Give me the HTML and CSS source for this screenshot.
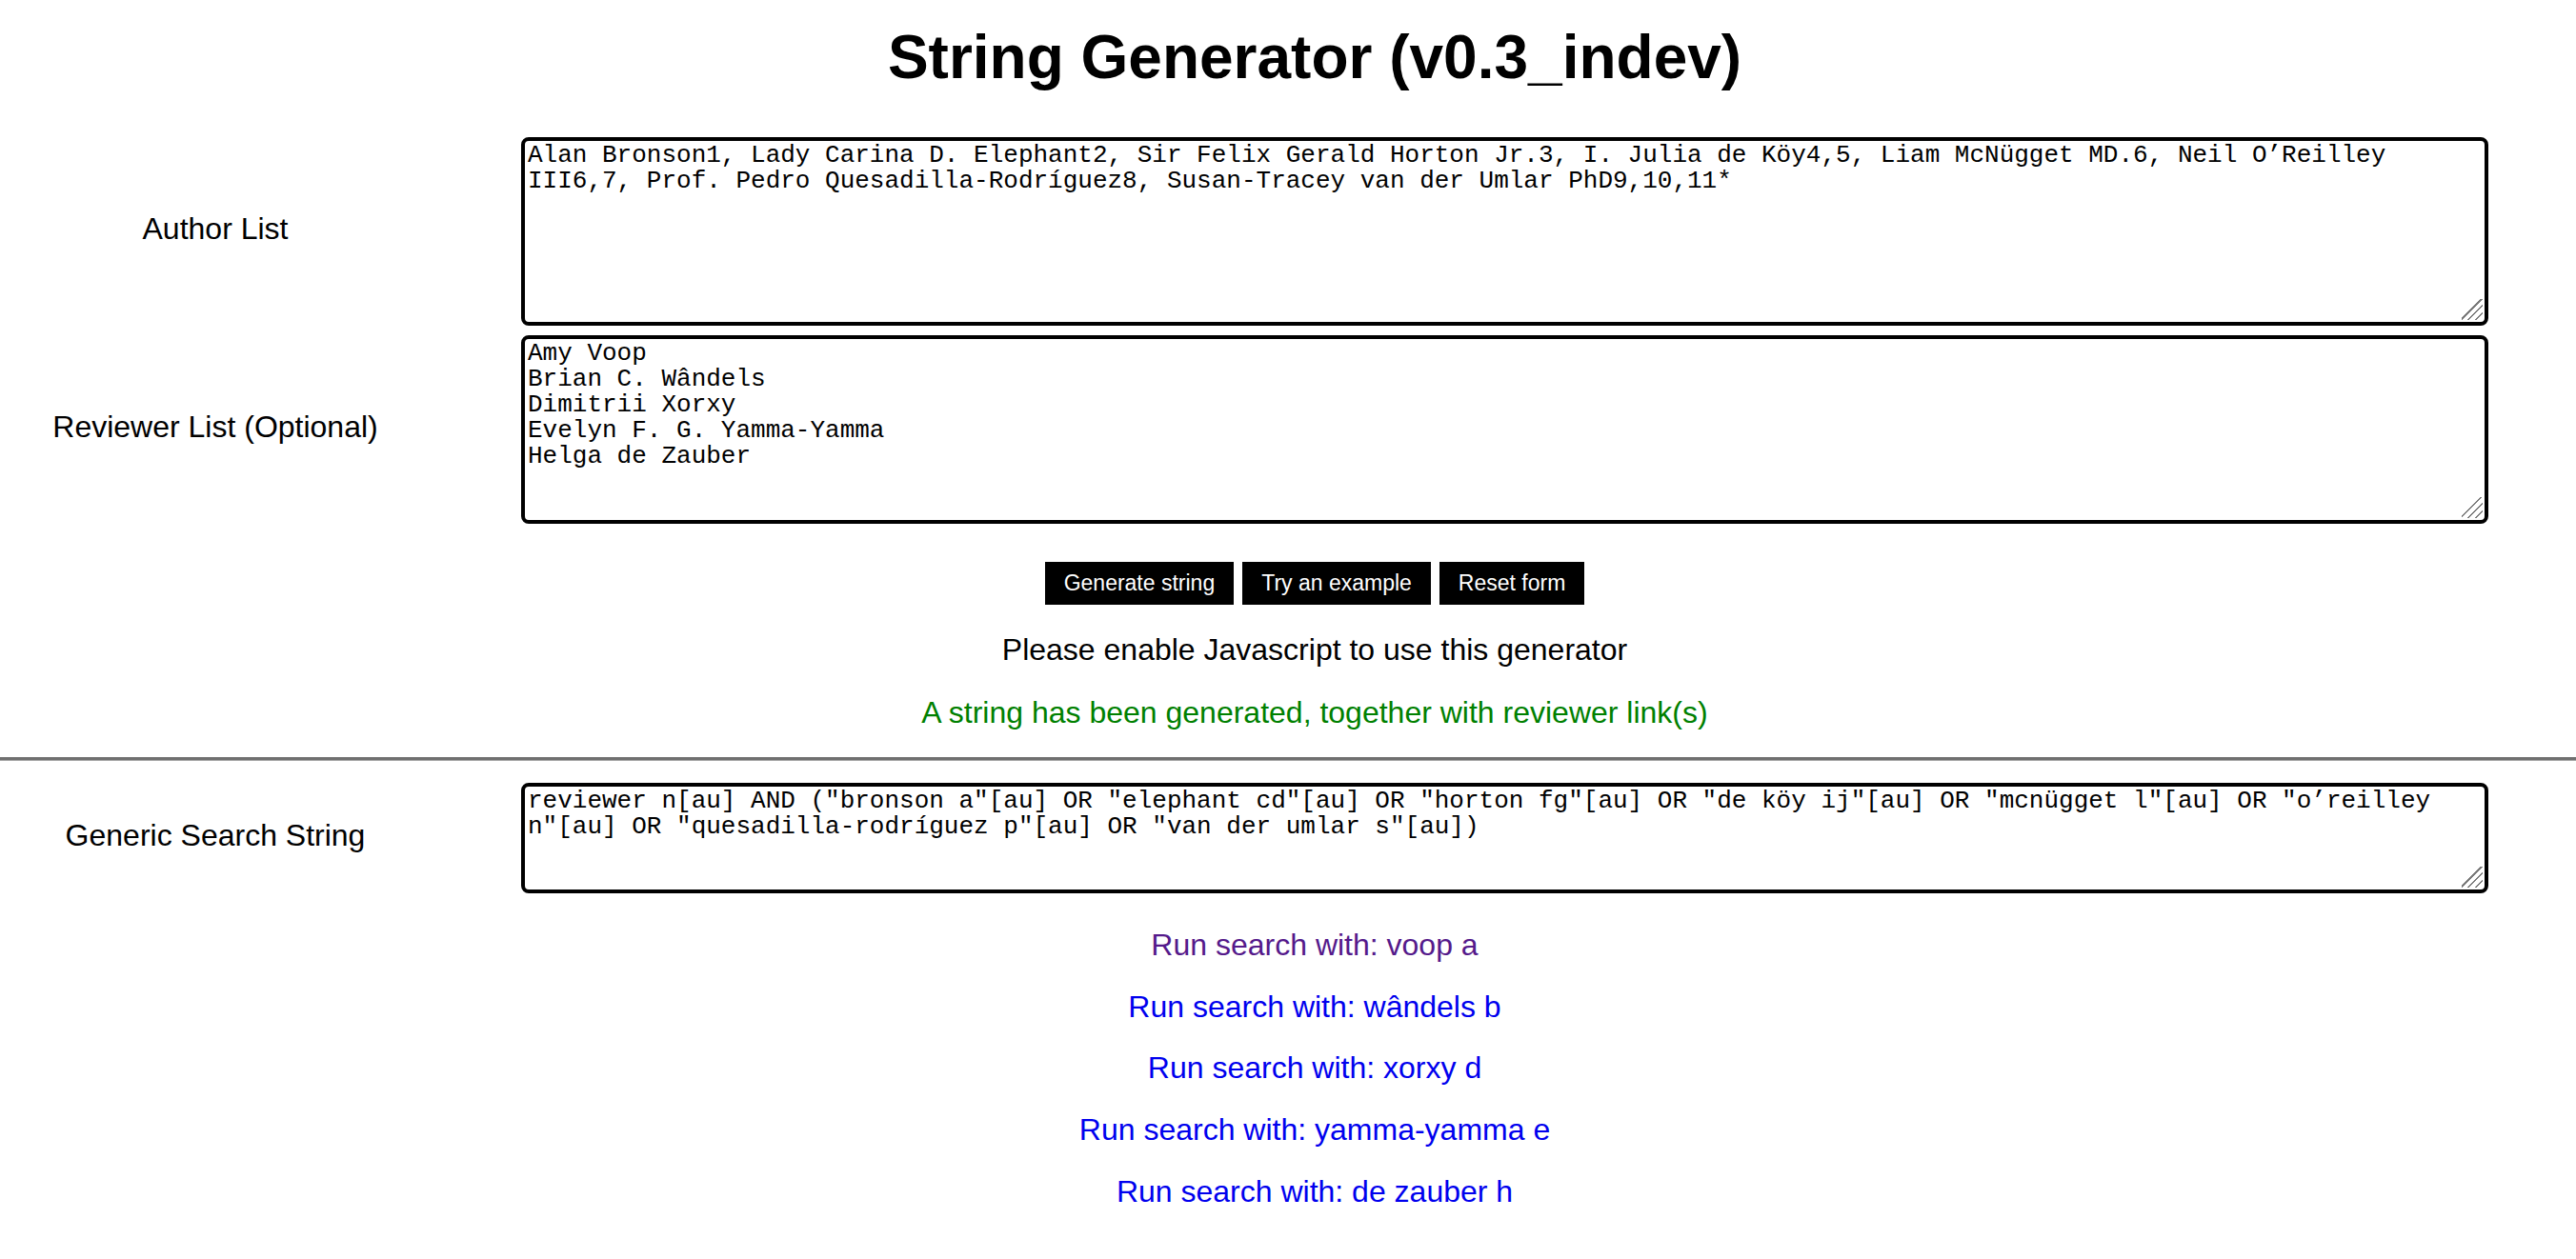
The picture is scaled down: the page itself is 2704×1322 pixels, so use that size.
FILE: index.html
```html
<!DOCTYPE html>
<html lang="en">
<head>
<meta charset="utf-8">
<title>String Generator (v0.3_indev)</title>
<link rel="stylesheet" href="styles.css">
</head>
<body>
<h1 class="title">String Generator (v0.3_indev)</h1>
<form class="form">
  <div class="rows">
    <div class="row">
      <label class="label" for="authors">Author List</label>
      <div class="field-wrap">
        <textarea id="authors" class="field field-tall" spellcheck="false">Alan Bronson1, Lady Carina D. Elephant2, Sir Felix Gerald Horton Jr.3, I. Julia de Köy4,5, Liam McNügget MD.6, Neil O’Reilley III6,7, Prof. Pedro Quesadilla-Rodríguez8, Susan-Tracey van der Umlar PhD9,10,11*</textarea>
        <span class="grip" aria-hidden="true"></span>
      </div>
    </div>
    <div class="row">
      <label class="label" for="reviewers">Reviewer List (Optional)</label>
      <div class="field-wrap">
        <textarea id="reviewers" class="field field-tall" spellcheck="false">Amy Voop
Brian C. Wândels
Dimitrii Xorxy
Evelyn F. G. Yamma-Yamma
Helga de Zauber</textarea>
        <span class="grip" aria-hidden="true"></span>
      </div>
    </div>
  </div>
  <div class="actions">
    <button type="button" class="btn">Generate string</button>
    <button type="button" class="btn">Try an example</button>
    <button type="reset" class="btn">Reset form</button>
  </div>
</form>
<p class="notice">Please enable Javascript to use this generator</p>
<p class="notice status">A string has been generated, together with reviewer link(s)</p>
<hr class="divider">
<div class="row row-generic">
  <label class="label" for="generic">Generic Search String</label>
  <div class="field-wrap">
    <textarea id="generic" class="field field-short" spellcheck="false">reviewer n[au] AND ("bronson a"[au] OR "elephant cd"[au] OR "horton fg"[au] OR "de köy ij"[au] OR "mcnügget l"[au] OR "o’reilley n"[au] OR "quesadilla-rodríguez p"[au] OR "van der umlar s"[au])</textarea>
    <span class="grip" aria-hidden="true"></span>
  </div>
</div>
<div class="links">
  <a class="link link-visited" href="#voop">Run search with: voop a</a>
  <a class="link" href="#wandels">Run search with: wândels b</a>
  <a class="link" href="#xorxy">Run search with: xorxy d</a>
  <a class="link" href="#yamma">Run search with: yamma-yamma e</a>
  <a class="link" href="#zauber">Run search with: de zauber h</a>
</div>
</body>
</html>
```

FILE: styles.css
```css
html, body {
  background: #fff;
}

body {
  margin: 0;
  font-family: "Liberation Sans", Arial, Helvetica, sans-serif;
  color: #000;
}

.title {
  margin: 23px 0 0;
  padding-left: 56px;
  text-align: center;
  font-size: 64px;
  line-height: 74px;
  font-weight: bold;
}

.rows {
  margin-top: 47px;
  display: flex;
  flex-direction: column;
  gap: 10px;
}

.row {
  display: grid;
  grid-template-columns: 452px 1fr;
  column-gap: 95px;
  padding-right: 92px;
  align-items: center;
}

.label {
  font-size: 32px;
  line-height: 37px;
  text-align: center;
  padding-bottom: 5px;
}

.field-wrap {
  position: relative;
}

.field {
  box-sizing: border-box;
  display: block;
  width: 100%;
  margin: 0;
  border: 4px solid #000;
  border-radius: 8px;
  padding: 2px 24px 2px 3px;
  font-family: "Liberation Mono", "Courier New", monospace;
  font-size: 26px;
  line-height: 27px;
  color: #000;
  background: #fff;
  outline: none;
  resize: none;
}

.grip {
  position: absolute;
  right: 6px;
  bottom: 6px;
  width: 22px;
  height: 22px;
  pointer-events: none;
  background: linear-gradient(135deg,
    transparent 0 44%,
    #7a7a7a 44% 50%,
    transparent 50% 62%,
    #7a7a7a 62% 68%,
    transparent 68% 80%,
    #7a7a7a 80% 86%,
    transparent 86% 100%);
}

.field-tall {
  height: 198px;
}

.field-short {
  height: 116px;
}

.actions {
  margin-top: 40px;
  padding-left: 56px;
  display: flex;
  justify-content: center;
  gap: 9px;
}

.btn {
  height: 45px;
  padding: 0 20px;
  border: 0;
  border-radius: 0;
  background: #000;
  color: #fff;
  font-family: "Liberation Sans", Arial, Helvetica, sans-serif;
  font-size: 23px;
  cursor: pointer;
}

.notice {
  margin: 29px 0 0;
  padding-left: 56px;
  text-align: center;
  font-size: 32px;
  line-height: 37px;
}

.status {
  margin-top: 29px;
  color: #008000;
}

.divider {
  margin: 28px 0 0;
  height: 0;
  border: 0;
  border-top: 3px solid #6f6f6f;
  border-bottom: 1px solid #a4a4a4;
}

.row-generic {
  margin-top: 23px;
}

.links {
  margin-top: 36px;
  padding-left: 56px;
  display: flex;
  flex-direction: column;
  align-items: center;
  gap: 27.7px;
}

.link {
  font-size: 32px;
  line-height: 37px;
  color: #0000ee;
  text-decoration: none;
}

.link-visited {
  color: #551a8b;
}
```
